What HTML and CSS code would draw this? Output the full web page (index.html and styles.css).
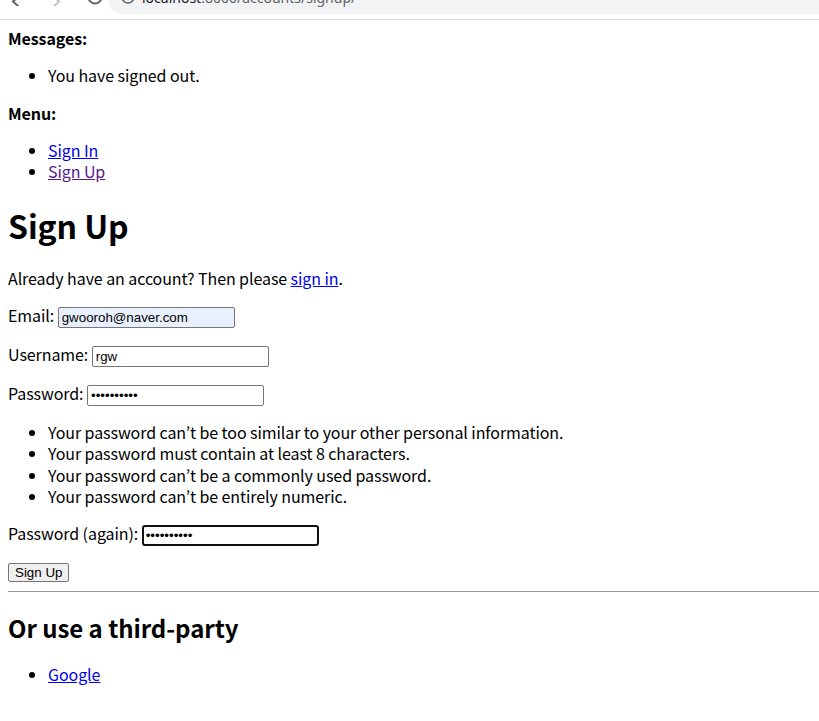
FILE: index.html
```html
<!DOCTYPE html>
<html lang="en">
<head>
<meta charset="UTF-8" />
<title>Signup</title>
<link rel="stylesheet" href="styles.css">
</head>
<body>

<!-- bottom edge of the browser toolbar, cut off at the top of the shot -->
<div class="browser-bar">
  <div class="nav-buttons">
    <svg class="nav-icon" width="14" height="6" viewBox="0 0 14 6"><path d="M9 -4 L3 1.5 L9 7" fill="none" stroke="#5f6368" stroke-width="2"/></svg>
    <svg class="nav-icon" width="14" height="6" viewBox="0 0 14 6"><path d="M5 -4 L11 1.5 L5 7" fill="none" stroke="#c4c7c5" stroke-width="2"/></svg>
    <svg class="nav-icon" width="18" height="6" viewBox="0 0 18 6"><path d="M2.5 -3 A6.5 6.5 0 0 0 15.5 -3" fill="none" stroke="#5f6368" stroke-width="2"/></svg>
  </div>
  <div class="omnibox">
    <svg class="info-icon" width="16" height="6" viewBox="0 0 16 6"><circle cx="8" cy="-3" r="6" fill="none" stroke="#5f6368" stroke-width="1.6"/></svg>
    <span class="url"><span class="host">localhost</span>:8000/accounts/signup/</span>
  </div>
</div>

<div class="page">
  <div>
    <strong>Messages:</strong>
    <ul>
      <li>You have signed out.</li>
    </ul>
  </div>

  <div>
    <strong>Menu:</strong>
    <ul>
      <li><a href="#">Sign In</a></li>
      <li><a href="#" class="visited">Sign Up</a></li>
    </ul>
  </div>

  <h1>Sign Up</h1>

  <p>Already have an account? Then please <a href="#">sign in</a>.</p>

  <form class="signup">
    <p><label for="id_email">Email:</label> <input type="email" id="id_email" class="autofill" value="gwooroh@naver.com"></p>
    <p><label for="id_username">Username:</label> <input type="text" id="id_username" value="rgw"></p>
    <p><label for="id_password1">Password:</label> <input type="password" id="id_password1" value="abcdefghij"></p>
    <ul>
      <li>Your password can’t be too similar to your other personal information.</li>
      <li>Your password must contain at least 8 characters.</li>
      <li>Your password can’t be a commonly used password.</li>
      <li>Your password can’t be entirely numeric.</li>
    </ul>
    <p><label for="id_password2">Password (again):</label> <input type="password" id="id_password2" class="focused" value="abcdefghij"></p>
    <button type="button">Sign Up</button>
  </form>

  <hr>

  <h2>Or use a third-party</h2>
  <ul>
    <li><a href="#">Google</a></li>
  </ul>
</div>

</body>
</html>
```

FILE: styles.css
```css
/* Base */
body {
  margin: 0;
  font-family: "Noto Sans CJK KR", "Noto Sans", sans-serif;
  font-size: 16px;
  line-height: 1.33;
  letter-spacing: -0.08px;
  color: #000;
  background: #fff;
}
a {
  color: #0000ee;
}
a.visited {
  color: #551a8b;
}
h2 {
  letter-spacing: -0.05px;
}

/* Browser toolbar strip */
.browser-bar {
  height: 19px;
  border-bottom: 1px solid #dadce0;
  display: flex;
  overflow: hidden;
  letter-spacing: 0;
}
.nav-buttons {
  width: 108px;
  display: flex;
  align-items: flex-start;
  gap: 24px;
  padding-left: 10px;
  box-sizing: border-box;
}
.omnibox {
  flex: 1;
  height: 14px;
  background: #f1f3f4;
  border-bottom-left-radius: 14px;
  display: flex;
  align-items: flex-end;
  overflow: hidden;
}
.info-icon {
  margin: 0 6px 8px 12px;
}
.url {
  font-family: "Noto Sans", sans-serif;
  font-size: 14px;
  line-height: 14px;
  color: #5f6368;
  margin-bottom: 9px;
}
.url .host {
  color: #202124;
}

/* Page */
.page {
  padding: 8px;
}
ul {
  padding-left: 40px;
}

/* Form controls */
input {
  width: 177px;
  height: 21px;
  box-sizing: border-box;
  font-family: "Liberation Sans", Arial, sans-serif;
  font-size: 13.33px;
  letter-spacing: 0;
  padding: 1px 3px;
  border: 1px solid #767676;
  border-radius: 2px;
  background: #fff;
  color: #000;
}
input.autofill {
  background: #e8f0fe;
}
input.focused {
  border: 2px solid #101010;
  border-radius: 3px;
  padding: 0 2px;
}
button {
  font-family: "Liberation Sans", Arial, sans-serif;
  font-size: 13.33px;
  letter-spacing: 0;
  height: 19px;
  padding: 0 6px;
  border: 1px solid #767676;
  border-radius: 2px;
  background: #efefef;
  color: #000;
  vertical-align: 2px;
}
hr {
  margin: 8px -8px 8px 0;
  border: 0;
  border-top: 1px solid #9a9a9a;
}
```
